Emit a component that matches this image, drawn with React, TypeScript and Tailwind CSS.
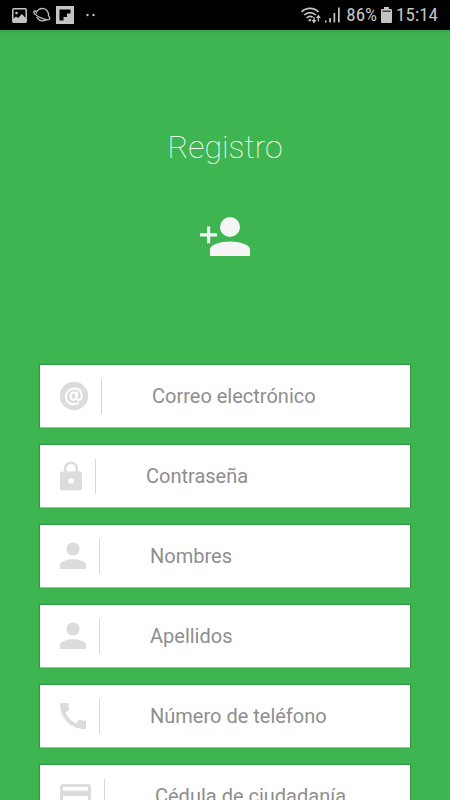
import type { ReactNode } from "react";

type Field = {
  id: string;
  label: string;
  type: string;
  icon: ReactNode;
};

const PersonIcon = () => (
  <svg width="26" height="28" viewBox="0 0 26 28" fill="currentColor" aria-hidden="true">
    <circle cx="13" cy="7" r="6.600" />
    <path d="M0 27v-4.300C0 19.200 7.600 17.200 13 17.200s13 2 13 5.500V27z" />
  </svg>
);

const AtIcon = () => (
  <svg width="28" height="30" viewBox="0 0 28 30" fill="none" aria-hidden="true">
    <circle cx="14" cy="15" r="14.200" fill="currentColor" />
    <g stroke="#fff" strokeWidth="2" strokeLinecap="round">
      <ellipse cx="13.600" cy="15.200" rx="3" ry="3.700" />
      <path d="M17.300 11.300l-.7 5.400c-.2 1.800.8 2.600 2 2.400 2-.3 3.100-2.500 3-5.100-.3-4-3.300-6.400-7.400-6.400-4.800 0-8.200 3.500-8.200 8 0 4.700 3.200 7.600 7.600 7.600 1.700 0 3.100-.3 4.600-1" />
    </g>
  </svg>
);

const LockIcon = () => (
  <svg width="22" height="30" viewBox="0 0 22 30" fill="currentColor" aria-hidden="true">
    <path
      fillRule="evenodd"
      d="M2.500 10.500H4V7.500a7 7 0 0 1 14 0v3h1.500A2.500 2.500 0 0 1 22 13v14a2.500 2.500 0 0 1-2.500 2.500h-17A2.500 2.500 0 0 1 0 27V13a2.500 2.500 0 0 1 2.500-2.500zM6.400 10.500h9.200v-3a4.600 4.600 0 0 0-9.200 0zM11 17.200a2.800 2.800 0 1 0 0 5.600 2.800 2.800 0 0 0 0-5.600z"
    />
  </svg>
);

const PhoneIcon = () => (
  <svg width="26" height="28" viewBox="0 0 26 28" fill="currentColor" aria-hidden="true">
    <path d="M1 1h6.400c.6 0 .9.300.9.900 0 1.900.3 3.700.8 5.400.1.400 0 .8-.3 1L5.700 10.500c2 4.900 5.800 8.700 10.400 10.900l2.400-3.100c.3-.4.700-.5 1.100-.4 1.700.5 3.600.8 5.500.9.600 0 .9.300.9.900V26c0 .6-.4 1-1 1C11 27 0 16.500 0 2c0-.6.4-1 1-1z" />
  </svg>
);

const CardIcon = () => (
  <svg width="31" height="25" viewBox="0 0 31 25" fill="currentColor" aria-hidden="true">
    <path
      fillRule="evenodd"
      d="M3 0h25a3 3 0 0 1 3 3v19a3 3 0 0 1-3 3H3a3 3 0 0 1-3-3V3a3 3 0 0 1 3-3zM3 3v3.500h25V3zM3 12v10h25V12z"
    />
  </svg>
);

const fields: Field[] = [
  { id: "correo", label: "Correo electrónico", type: "email", icon: <AtIcon /> },
  { id: "contrasena", label: "Contraseña", type: "password", icon: <LockIcon /> },
  { id: "nombres", label: "Nombres", type: "text", icon: <PersonIcon /> },
  { id: "apellidos", label: "Apellidos", type: "text", icon: <PersonIcon /> },
  { id: "telefono", label: "Número de teléfono", type: "tel", icon: <PhoneIcon /> },
  { id: "cedula", label: "Cédula de ciudadanía", type: "text", icon: <CardIcon /> },
];

function StatusBar() {
  return (
    <header className="flex h-[30px] shrink-0 items-center justify-between bg-black px-3 text-[#c4c4c4]">
      <div className="flex items-center">
        <svg width="15" height="15" viewBox="0 0 15 15" fill="none" aria-hidden="true">
          <rect x="0.800" y="0.800" width="13.400" height="13.400" rx="1" stroke="currentColor" strokeWidth="1.500" />
          <circle cx="4.500" cy="5" r="1.300" fill="currentColor" />
          <path d="M1 11l3-2.500 2 1.500 4-4 4 4.500V14H1z" fill="currentColor" />
        </svg>
        <svg className="ml-1.5" width="18" height="16" viewBox="0 0 18 16" fill="none" stroke="currentColor" strokeWidth="1.300" aria-hidden="true">
          <path d="M3 6.500a6.300 6.300 0 0 1 12.400 2.700M13.300 12.700A6.300 6.300 0 0 1 3.800 10" />
          <path d="M3.500 4.200C1.500 3.700.3 4.200.9 5.700c1.400 2.800 9.300 7 13.800 7.200 2.400 0 3-1.400.8-3.700" />
        </svg>
        <svg className="ml-[5px]" width="18" height="18" viewBox="0 0 18 18" aria-hidden="true">
          <path fill="currentColor" d="M0 0h18v18H0z" />
          <path fill="#000" d="M3.500 3.500h11v4H11v3.500H7.500v3.500h-4z" />
        </svg>
        <svg className="ml-3" width="10" height="4" viewBox="0 0 10 4" fill="currentColor" aria-hidden="true">
          <circle cx="1.500" cy="2" r="1.200" />
          <circle cx="7.500" cy="2" r="1.200" />
        </svg>
      </div>
      <div className="flex items-center font-['Roboto_Condensed',Roboto,sans-serif] text-[19px] leading-5">
        <svg width="20" height="17" viewBox="0 0 20 17" fill="none" stroke="currentColor" strokeWidth="1.700" aria-hidden="true">
          <path d="M.6 4.800c4.600-4.600 12.200-4.600 16.800 0M3.200 8c3.400-3.200 8.200-3.200 11.600 0M5.600 11c2-1.900 4.400-2 6-.8" />
          <path d="M7 13.200l2-1.400 1.500 1-1.500 2z" fill="currentColor" stroke="none" />
          <path d="M13 10v5M17.400 9v5.500" strokeWidth="1.300" />
          <path d="M10.600 13h4.800L13 16.500zM15 11h4.800l-2.400-3.500z" fill="currentColor" stroke="none" />
        </svg>
        <svg className="ml-1" width="15" height="16" viewBox="0 0 15 16" fill="currentColor" aria-hidden="true">
          <path d="M0 13.500h1.700v2H0zM4.200 11h1.700v4.500H4.200zM8.500 6h1.700v9.500H8.500zM13 .5h1.700v15H13z" />
        </svg>
        <span className="ml-1.5">86%</span>
        <svg className="ml-1" width="11" height="16" viewBox="0 0 11 16" fill="currentColor" aria-hidden="true">
          <path d="M3 0h5v2h2a1 1 0 0 1 1 1v12a1 1 0 0 1-1 1H1a1 1 0 0 1-1-1V3a1 1 0 0 1 1-1h2z" />
          <path d="M1.500 3.500h8V5h-8z" fill="#444" />
        </svg>
        <time className="ml-1">15:14</time>
      </div>
    </header>
  );
}

function FieldRow({ id, label, type, icon }: Field) {
  return (
    <div className="flex h-[62px] items-center bg-white pl-5 text-[#dcdcdc] shadow-[0_0_1px_1px_rgba(0,70,40,0.25),0_1px_0_0_#c9e8cd]">
      <label htmlFor={id} aria-label={label} className="shrink-0">
        {icon}
      </label>
      <div className="ml-[13px] h-[35px] w-px shrink-0 bg-[#d6d6d6]" />
      <input
        id={id}
        type={type}
        placeholder={label}
        className="h-full min-w-0 flex-1 bg-transparent pl-[50px] text-[20px] text-gray-700 outline-none placeholder:text-[#8e8e8e]"
      />
    </div>
  );
}

export default function App() {
  return (
    <div className="flex h-screen flex-col bg-[#3fb551] font-[Roboto,sans-serif]">
      <StatusBar />
      <main className="min-h-0 flex-1 overflow-y-auto bg-linear-to-b from-[#36a047] to-[#3fb551] to-[4px] px-10 pb-10 [scrollbar-width:none]">
        <h1 className="pt-[97px] text-center text-[32px] leading-10 font-thin text-white">Registro</h1>
        <svg
          className="mx-auto mt-[50px] block"
          width="50"
          height="39"
          viewBox="0 0 50 39"
          fill="#f5f5f5"
          aria-hidden="true"
        >
          <circle cx="30" cy="10" r="10" />
          <path d="M10 39v-6.500C10 27.500 20.500 24.500 30 24.500s20 3 20 8V39z" />
          <path d="M7 9.500h3.200v6.800H17v3.200h-6.800v6.800H7v-6.800H0v-3.200h7z" />
        </svg>
        <form className="mt-[109px] flex flex-col gap-[18px]">
          {fields.map((field) => (
            <FieldRow key={field.id} {...field} />
          ))}
        </form>
      </main>
    </div>
  );
}
